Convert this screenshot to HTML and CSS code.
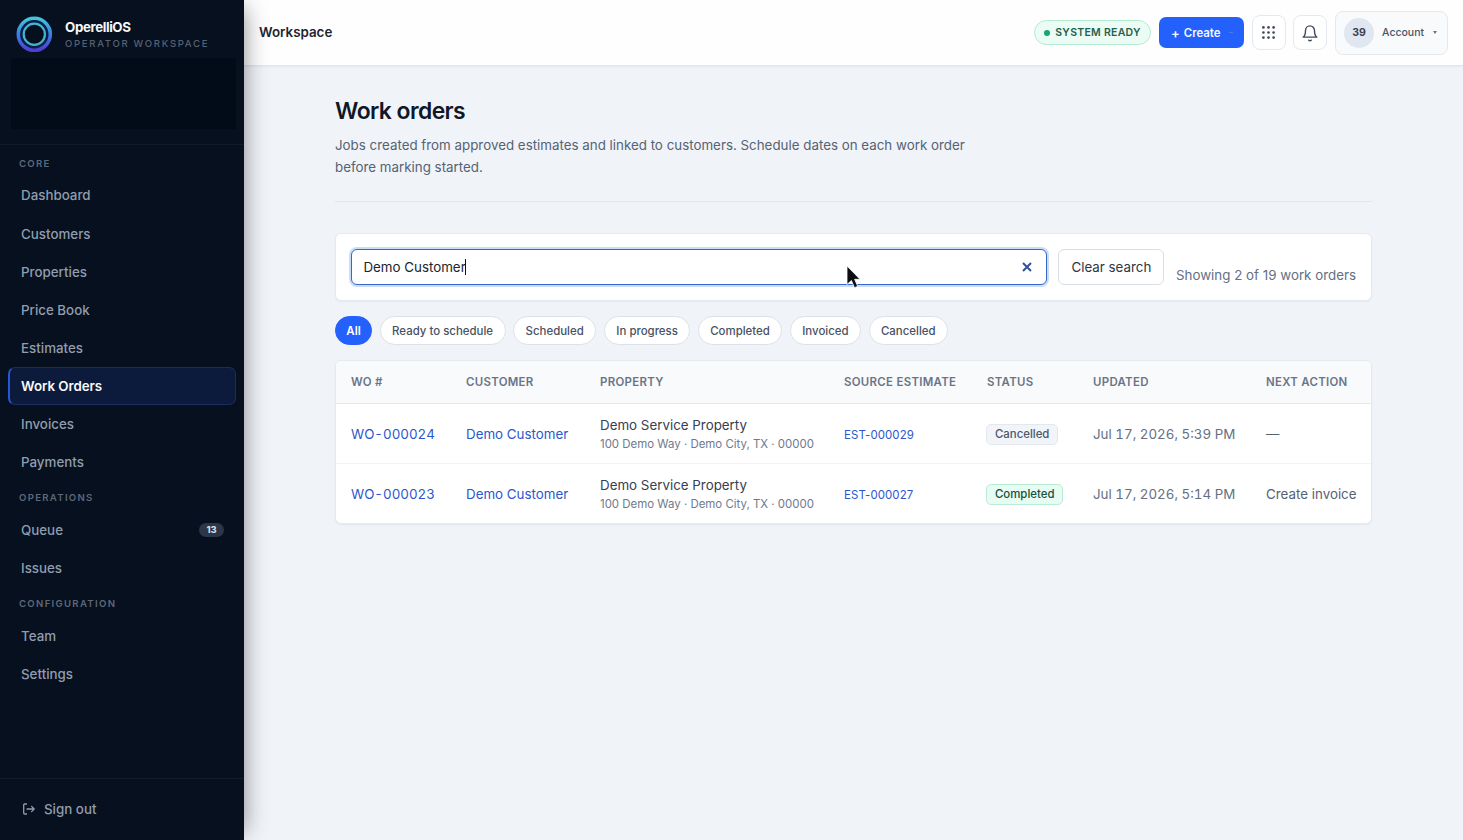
FILE: index.html
```html
<!DOCTYPE html>
<html lang="en">
<head>
    <meta charset="UTF-8">
    <title>Work orders - OperelliOS</title>
    <link rel="stylesheet" href="styles.css">
</head>
<body>
<div class="app">
    <aside class="sidebar">
        <div class="brand">
            <div class="brand-row">
                <svg class="logo" viewBox="0 0 38 38">
                    <defs>
                        <linearGradient id="ring" x1="0" y1="0" x2="0" y2="1">
                            <stop offset="0" stop-color="#45c6dc"/>
                            <stop offset="0.5" stop-color="#3b7fe0"/>
                            <stop offset="1" stop-color="#4f3fd0"/>
                        </linearGradient>
                    </defs>
                    <circle cx="19.300" cy="19.300" r="14.2" fill="#071d4c"/>
                    <circle cx="19.300" cy="19.300" r="16" fill="none" stroke="url(#ring)" stroke-width="3.6"/>
                    <circle cx="19.300" cy="19.300" r="10.6" fill="#050f1e" stroke="#46b5cb" stroke-width="2.2"/>
                </svg>
                <div class="brand-text">
                    <div class="brand-name">OperelliOS</div>
                    <div class="brand-sub">OPERATOR WORKSPACE</div>
                </div>
            </div>
            <div class="brand-panel"></div>
        </div>
        <nav class="nav">
            <div class="nav-label">CORE</div>
            <a class="nav-item">Dashboard</a>
            <a class="nav-item">Customers</a>
            <a class="nav-item">Properties</a>
            <a class="nav-item">Price Book</a>
            <a class="nav-item">Estimates</a>
            <a class="nav-item active">Work Orders</a>
            <a class="nav-item">Invoices</a>
            <a class="nav-item">Payments</a>
            <div class="nav-label">OPERATIONS</div>
            <a class="nav-item">Queue <span class="count">13</span></a>
            <a class="nav-item">Issues</a>
            <div class="nav-label">CONFIGURATION</div>
            <a class="nav-item">Team</a>
            <a class="nav-item">Settings</a>
        </nav>
        <div class="signout">
            <svg class="signout-icon" viewBox="0 0 14 14" fill="none" stroke="currentColor" stroke-width="1.3" stroke-linecap="round" stroke-linejoin="round">
                <path d="M4.500 2H2.700a1 1 0 0 0-1 1v8a1 1 0 0 0 1 1h1.800M5 7h7.200M9.600 4.400 12.200 7 9.600 9.600"/>
            </svg>
            <span>Sign out</span>
        </div>
    </aside>

    <div class="main">
        <header class="topbar">
            <div class="topbar-title">Workspace</div>
            <div class="topbar-actions">
                <div class="ready"><span class="dot"></span><span>SYSTEM READY</span></div>
                <button class="create"><span class="plus">+</span><span>Create</span><span class="create-caret"></span></button>
                <button class="icon-btn">
                    <svg width="15" height="15" viewBox="0 0 15 15" fill="#414b5c">
                        <circle cx="2.4" cy="2.4" r="1.35"/><circle cx="7.5" cy="2.4" r="1.35"/><circle cx="12.6" cy="2.4" r="1.35"/>
                        <circle cx="2.4" cy="7.5" r="1.35"/><circle cx="7.5" cy="7.5" r="1.35"/><circle cx="12.6" cy="7.5" r="1.35"/>
                        <circle cx="2.4" cy="12.6" r="1.35"/><circle cx="7.5" cy="12.6" r="1.35"/><circle cx="12.6" cy="12.6" r="1.35"/>
                    </svg>
                </button>
                <button class="icon-btn">
                    <svg width="18" height="18" viewBox="0 0 24 24" fill="none" stroke="#414b5c" stroke-width="1.9" stroke-linecap="round" stroke-linejoin="round">
                        <path d="M18 8.500a6 6 0 0 0-12 0c0 6.500-3 9-3 9h18s-3-2.500-3-9M10.300 21.500a2 2 0 0 0 3.400 0"/>
                    </svg>
                </button>
                <div class="account">
                    <span class="avatar">39</span>
                    <span class="account-name">Account</span>
                    <span class="caret"></span>
                </div>
            </div>
        </header>

        <main class="content">
            <div class="page-head">
                <h1>Work orders</h1>
                <p>Jobs created from approved estimates and linked to customers. Schedule dates on each work order before marking started.</p>
            </div>

            <div class="search-card">
                <div class="search-box">
                    <span class="search-text">Demo Customer</span><span class="text-cursor"></span>
                    <svg class="search-clear" viewBox="0 0 10 10" stroke="#2c4f97" stroke-width="1.9"><path d="M1 1l8 8M9 1L1 9"/></svg>
                    <svg class="pointer" viewBox="0 0 15 24"><path d="M1 1v18.500l4.400-4 3.100 7.200 3.200-1.400-3.100-7H14z" fill="#0b0d10" stroke="#fff" stroke-width="0.8"/></svg>
                </div>
                <button class="clear-btn">Clear search</button>
                <div class="result-count">Showing 2 of 19 work orders</div>
            </div>

            <div class="filters">
                <button class="chip selected">All</button>
                <button class="chip chip-ready">Ready to schedule</button>
                <button class="chip chip-scheduled">Scheduled</button>
                <button class="chip chip-progress">In progress</button>
                <button class="chip chip-completed">Completed</button>
                <button class="chip chip-invoiced">Invoiced</button>
                <button class="chip chip-cancelled">Cancelled</button>
            </div>

            <div class="table-card">
                <table>
                    <colgroup>
                        <col class="col-wo"><col class="col-customer"><col class="col-property"><col class="col-estimate"><col class="col-status"><col class="col-updated"><col>
                    </colgroup>
                    <thead>
                        <tr>
                            <th>WO #</th>
                            <th>CUSTOMER</th>
                            <th>PROPERTY</th>
                            <th>SOURCE ESTIMATE</th>
                            <th>STATUS</th>
                            <th>UPDATED</th>
                            <th>NEXT ACTION</th>
                        </tr>
                    </thead>
                    <tbody>
                        <tr>
                            <td><a class="wo">WO-000024</a></td>
                            <td><a>Demo Customer</a></td>
                            <td><div class="prop">Demo Service Property</div><div class="addr">100 Demo Way · Demo City, TX · 00000</div></td>
                            <td><a class="est">EST-000029</a></td>
                            <td><span class="status">Cancelled</span></td>
                            <td class="updated">Jul 17, 2026, 5:39 PM</td>
                            <td class="next">—</td>
                        </tr>
                        <tr>
                            <td><a class="wo">WO-000023</a></td>
                            <td><a>Demo Customer</a></td>
                            <td><div class="prop">Demo Service Property</div><div class="addr">100 Demo Way · Demo City, TX · 00000</div></td>
                            <td><a class="est">EST-000027</a></td>
                            <td><span class="status done">Completed</span></td>
                            <td class="updated">Jul 17, 2026, 5:14 PM</td>
                            <td class="next">Create invoice</td>
                        </tr>
                    </tbody>
                </table>
            </div>
        </main>
    </div>
</div>
</body>
</html>
```

FILE: styles.css
```css
* {
    box-sizing: border-box;
}
body {
    margin: 0;
    font-family: Inter, "Liberation Sans", sans-serif;
    font-size: 13.35px;
    color: #111827;
    background: #f0f4f9;
}
button {
    font-family: inherit;
    margin: 0;
    padding: 0;
}
.app {
    display: flex;
    height: 840px;
    overflow: hidden;
}

/* sidebar */
.sidebar {
    position: relative;
    z-index: 2;
    width: 244px;
    flex: none;
    display: flex;
    flex-direction: column;
    background: #06101e;
    box-shadow: 8px 0 22px -8px rgba(0, 0, 0, 0.45);
}
.brand {
    height: 145px;
    border-bottom: 1px solid #101c2b;
    padding: 15px 8px 0 11px;
}
.brand-row {
    display: flex;
    align-items: center;
    gap: 12px;
    height: 38px;
    padding-left: 4px;
}
.logo {
    width: 38px;
    height: 38px;
}
.brand-text {
    padding-top: 2px;
}
.brand-name {
    font-size: 13.35px;
    font-weight: 700;
    line-height: 17px;
    letter-spacing: -0.4px;
    color: #f5f7fb;
}
.brand-sub {
    font-size: 9.55px;
    font-weight: 500;
    line-height: 15px;
    letter-spacing: 1.7px;
    color: #566274;
    white-space: nowrap;
}
.brand-panel {
    height: 71px;
    margin-top: 5px;
    background: #020c18;
}
.nav {
    flex: 1;
    padding: 1.8px 8px 0;
}
.nav-label {
    height: 29.6px;
    padding: 10px 11px 0;
    font-size: 9.6px;
    font-weight: 600;
    line-height: 13px;
    letter-spacing: 1.3px;
    color: #5c687a;
}
.nav-item {
    display: flex;
    align-items: center;
    justify-content: space-between;
    height: 38.13px;
    padding: 0 12px 0 13px;
    font-weight: 500;
    color: #919dae;
    border-radius: 7px;
}
.nav-item.active {
    padding-left: 11px;
    padding-right: 11px;
    font-weight: 600;
    letter-spacing: -0.05px;
    color: #f8fafc;
    background: #0c1a3c;
    border: 1px solid #1c2d5c;
    border-left: 2px solid #2458d8;
}
.count {
    width: 25px;
    height: 14px;
    border-radius: 7px;
    background: #2b3646;
    color: #dce2ea;
    font-size: 9.5px;
    font-weight: 700;
    line-height: 14px;
    text-align: center;
}
.signout {
    display: flex;
    align-items: center;
    gap: 8px;
    height: 62px;
    padding: 0 0 1px 22px;
    border-top: 1px solid #101c2b;
    font-weight: 500;
    color: #919dae;
}
.signout-icon {
    width: 14px;
    height: 14px;
}

/* top bar */
.main {
    flex: 1;
}
.topbar {
    display: flex;
    align-items: center;
    justify-content: space-between;
    height: 66px;
    padding: 0 15px;
    background: #fefefe;
    border-bottom: 1px solid #e3e6ed;
    box-shadow: 0 1px 2px rgba(15, 23, 42, 0.05);
}
.topbar-title {
    padding-bottom: 1px;
    font-weight: 600;
    color: #1e2533;
}
.topbar-actions {
    display: flex;
    align-items: center;
    gap: 7.7px;
}
.ready {
    display: flex;
    align-items: center;
    gap: 5px;
    width: 117px;
    height: 25px;
    padding-left: 9px;
    border: 1px solid #b6ebd3;
    border-radius: 13px;
    background: #ebfcf4;
    font-size: 10.5px;
    font-weight: 600;
    letter-spacing: 0.27px;
    color: #27604d;
    white-space: nowrap;
}
.dot {
    width: 6px;
    height: 6px;
    border-radius: 50%;
    background: #17a673;
}
.create {
    display: flex;
    align-items: center;
    gap: 4px;
    width: 85px;
    height: 31px;
    padding-left: 12px;
    border: 0;
    border-radius: 7px;
    background: #2460fb;
    color: #f4f7ff;
    font-size: 11.45px;
    font-weight: 600;
}
.plus {
    font-size: 13px;
}
.create-caret {
    width: 4px;
    height: 1px;
    margin-left: 4px;
    background: #4a78e8;
}
.icon-btn {
    display: flex;
    align-items: center;
    justify-content: center;
    width: 34px;
    height: 35px;
    border: 1px solid #e4e8ef;
    border-radius: 8px;
    background: #fff;
}
.account {
    display: flex;
    align-items: center;
    width: 113px;
    height: 44px;
    padding-left: 8px;
    border: 1px solid #e4e8ef;
    border-radius: 8px;
    background: #f8fafc;
}
.avatar {
    width: 30px;
    height: 30px;
    border-radius: 50%;
    background: #e1e7f0;
    color: #364152;
    font-size: 10.5px;
    font-weight: 700;
    line-height: 30px;
    text-align: center;
}
.account-name {
    margin-left: 8px;
    font-size: 10.5px;
    font-weight: 500;
    color: #4a5567;
}
.caret {
    margin-left: 9px;
    border: 2px solid transparent;
    border-top: 3px solid #687385;
    border-bottom: 0;
}

/* page */
.content {
    padding: 30px 91px 0;
}
.page-head {
    height: 106px;
    border-bottom: 1px solid #e2e7ee;
}
h1 {
    margin: 0;
    font-size: 22.9px;
    font-weight: 600;
    line-height: 30px;
    letter-spacing: -0.57px;
    color: #101828;
}
.page-head p {
    width: 645px;
    margin: 8px 0 0;
    font-size: 13.35px;
    line-height: 22px;
    color: #566273;
}
.search-card {
    display: flex;
    align-items: flex-start;
    height: 68px;
    margin-top: 31px;
    padding: 15px;
    border: 1px solid #e5e9f0;
    border-radius: 6px;
    background: #fff;
    box-shadow: 0 1px 2px rgba(15, 23, 42, 0.05);
}
.search-box {
    position: relative;
    display: flex;
    align-items: center;
    width: 696px;
    height: 36px;
    padding-left: 11.4px;
    border: 1px solid #3867c8;
    border-radius: 6px;
    background: #fff;
    box-shadow: 0 0 0 2px #c9dcfb;
}
.search-text {
    color: #20242c;
}
.text-cursor {
    width: 1px;
    height: 16px;
    margin-left: -1px;
    background: #111;
}
.search-clear {
    width: 10px;
    height: 10px;
    margin-left: auto;
    margin-right: 14px;
}
.pointer {
    position: absolute;
    left: 494px;
    top: 15px;
    width: 15px;
    height: 24px;
}
.clear-btn {
    width: 106px;
    height: 36px;
    margin-left: 11.4px;
    border: 1px solid #d9dee6;
    border-radius: 6px;
    background: #fff;
    color: #2d3645;
    font-size: 13.35px;
}
.result-count {
    margin: 17px 0 0 11.6px;
    line-height: 18px;
    color: #647082;
    white-space: nowrap;
}
.filters {
    display: flex;
    gap: 7.6px;
    margin: 15px 0;
}
.chip {
    height: 29px;
    border: 1px solid #dce1e9;
    border-radius: 15px;
    background: #fff;
    color: #475264;
    font-size: 11.45px;
    font-weight: 500;
}
.chip.selected {
    width: 37px;
    border-color: #2460fb;
    background: #2460fb;
    color: #fff;
    font-weight: 600;
}
.chip-ready { width: 126px; }
.chip-scheduled { width: 83px; }
.chip-progress { width: 86.7px; }
.chip-completed { width: 84px; }
.chip-invoiced { width: 71.5px; }
.chip-cancelled { width: 79px; }

/* table */
.table-card {
    border: 1px solid #e5e9f0;
    border-radius: 6px;
    background: #fff;
    overflow: hidden;
    box-shadow: 0 1px 2px rgba(15, 23, 42, 0.06);
}
table {
    width: 100%;
    table-layout: fixed;
    border-collapse: separate;
    border-spacing: 0;
}
.col-wo { width: 115px; }
.col-customer { width: 134px; }
.col-property { width: 244px; }
.col-estimate { width: 143px; }
.col-status { width: 106px; }
.col-updated { width: 173px; }
th, td {
    padding: 0 0 0 15px;
    text-align: left;
    vertical-align: middle;
    white-space: nowrap;
}
th {
    height: 43px;
    border-bottom: 1px solid #e4e8ee;
    background: #f9fafc;
    color: #697587;
    font-size: 11.45px;
    font-weight: 600;
    letter-spacing: 0.3px;
}
td {
    height: 60px;
    padding-top: 1px;
    font-size: 13.35px;
}
tbody tr:first-child td {
    border-bottom: 1px solid #f0f3f7;
}
tbody tr:last-child td {
    height: 59px;
}
td a {
    color: #2b57d0;
}
.wo {
    font-variant-numeric: tabular-nums;
}
.est {
    font-size: 11.45px;
    letter-spacing: 0.1px;
}
.prop {
    line-height: 20px;
    color: #364050;
}
.addr {
    font-size: 11.45px;
    line-height: 18px;
    color: #6f7a8b;
}
.status {
    display: inline-block;
    height: 21px;
    margin-left: -1px;
    padding: 0 8px;
    border: 1px solid #e3e8ef;
    border-radius: 5px;
    background: #f1f4f9;
    color: #4c586a;
    font-size: 11.4px;
    font-weight: 500;
    line-height: 19px;
}
.status.done {
    border-color: #b9ecd4;
    background: #e6fbf1;
    color: #174f3c;
}
.updated {
    font-variant-numeric: tabular-nums;
    color: #647082;
}
.next {
    color: #566273;
}
```
